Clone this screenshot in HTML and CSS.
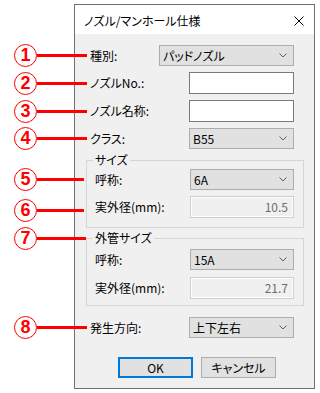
FILE: index.html
```html
<!DOCTYPE html>
<html>
<head>
    <title>ノズル/マンホール仕様</title>
    <meta charset="UTF-8">
    <meta name="viewport" content="width=device-width, initial-scale=1.0">
    <link rel="stylesheet" href="styles.css">
</head>
<body>
    <div class="page">
        <div class="dialog">
            <div class="titlebar">
                <span class="title">ノズル/マンホール仕様</span>
                <svg class="close" width="10" height="10" viewBox="0 0 10 10">
                    <path d="M0.5 0.5 L9.5 9.5 M9.5 0.5 L0.5 9.5" stroke="#000" stroke-width="1" fill="none"/>
                </svg>
            </div>
            <div class="dialog-body">
                <div class="row combo-row">
                    <span class="pin"><span class="num">1</span></span>
                    <span class="label">種別:</span>
                    <div class="combo wide"><span>パッドノズル</span><svg class="chev" width="8" height="5" viewBox="0 0 8 5"><polyline points="0.5,0.5 4,4 7.5,0.5" fill="none" stroke="#606060"/></svg></div>
                </div>
                <div class="row">
                    <span class="pin"><span class="num">2</span></span>
                    <span class="label">ノズルNo.:</span>
                    <div class="textbox"></div>
                </div>
                <div class="row">
                    <span class="pin"><span class="num">3</span></span>
                    <span class="label">ノズル名称:</span>
                    <div class="textbox"></div>
                </div>
                <div class="row combo-row">
                    <span class="pin"><span class="num">4</span></span>
                    <span class="label">クラス:</span>
                    <div class="combo"><span>B55</span><svg class="chev" width="8" height="5" viewBox="0 0 8 5"><polyline points="0.5,0.5 4,4 7.5,0.5" fill="none" stroke="#606060"/></svg></div>
                </div>

                <div class="group">
                    <div class="group-title"><span>サイズ</span></div>
                    <div class="group-box">
                        <div class="row combo-row">
                            <span class="pin inner"><span class="num">5</span></span>
                            <span class="label">呼称:</span>
                            <div class="combo"><span>6A</span><svg class="chev" width="8" height="5" viewBox="0 0 8 5"><polyline points="0.5,0.5 4,4 7.5,0.5" fill="none" stroke="#606060"/></svg></div>
                        </div>
                        <div class="row">
                            <span class="pin inner low"><span class="num">6</span></span>
                            <span class="label">実外径(mm):</span>
                            <div class="textbox readonly">10.5</div>
                        </div>
                    </div>
                </div>

                <div class="group second">
                    <div class="group-title">
                        <span class="pin title-pin"><span class="num">7</span></span>
                        <span>外管サイズ</span>
                    </div>
                    <div class="group-box">
                        <div class="row combo-row">
                            <span class="label">呼称:</span>
                            <div class="combo"><span>15A</span><svg class="chev" width="8" height="5" viewBox="0 0 8 5"><polyline points="0.5,0.5 4,4 7.5,0.5" fill="none" stroke="#606060"/></svg></div>
                        </div>
                        <div class="row">
                            <span class="label">実外径(mm):</span>
                            <div class="textbox readonly">21.7</div>
                        </div>
                    </div>
                </div>

                <div class="row combo-row direction">
                    <span class="pin"><span class="num">8</span></span>
                    <span class="label">発生方向:</span>
                    <div class="combo"><span>上下左右</span><svg class="chev" width="8" height="5" viewBox="0 0 8 5"><polyline points="0.5,0.5 4,4 7.5,0.5" fill="none" stroke="#606060"/></svg></div>
                </div>

                <div class="buttons">
                    <button class="btn default">OK</button>
                    <button class="btn">キャンセル</button>
                </div>
            </div>
        </div>
    </div>
</body>
</html>
```

FILE: styles.css
```css
body {
    margin: 0;
    background: #fff;
    font-family: "Noto Sans CJK JP", "Liberation Sans", sans-serif;
    font-size: 12px;
    font-feature-settings: "palt";
    color: #000;
}
.page {
    position: relative;
    width: 320px;
    height: 393px;
    padding: 4px 0 0 74px;
    box-sizing: border-box;
    overflow: hidden;
}
.dialog {
    width: 241px;
    height: 385px;
    border: 1px solid #707070;
    box-sizing: border-box;
    display: flex;
    flex-direction: column;
    background: #f0f0f0;
}
.titlebar {
    height: 29px;
    flex: none;
    background: #fff;
    display: flex;
    align-items: center;
    justify-content: space-between;
    padding: 3px 10px 0 9px;
    box-sizing: border-box;
}
.title {
    line-height: 16px;
}
.dialog-body {
    flex: 1;
    padding: 11px 20px 0 15px;
}
.row {
    display: flex;
    align-items: center;
    justify-content: space-between;
    height: 22px;
    margin-top: 6px;
}
.row:first-child {
    margin-top: 0;
}
.combo-row {
    height: 21px;
}
.label {
    line-height: 16px;
}
.combo {
    width: 105px;
    height: 21px;
    box-sizing: border-box;
    background: #e1e1e1;
    border: 1px solid #adadad;
    display: flex;
    align-items: center;
    justify-content: space-between;
    padding: 0 6px 0 3px;
}
.combo.wide {
    width: 135px;
}
.chev {
    display: block;
}
.textbox {
    width: 105px;
    height: 22px;
    box-sizing: border-box;
    background: #fff;
    border: 1px solid #7a7a7a;
}
.group .combo,
.group .textbox {
    width: 104px;
}
.textbox.readonly {
    background: #f0f0f0;
    border-color: #cfcfcf;
    box-shadow: inset 0 0 0 1px #fff;
    color: #6d6d6d;
    text-align: right;
    line-height: 20px;
    padding-right: 5px;
}

/* group box: title row draws the top edge */
.group {
    margin: 3px -10px 0 -4px;
}
.group.second {
    margin-top: 2px;
}
.group-title {
    display: flex;
    align-items: center;
    height: 16px;
    line-height: 16px;
}
.group-title span:last-child {
    padding: 0 2px;
}
.group-title::before,
.group-title::after {
    content: "";
    align-self: flex-end;
    height: 8px;
    box-sizing: border-box;
    border-top: 1px solid #d5d5d5;
}
.group-title::before {
    width: 7px;
    border-left: 1px solid #d5d5d5;
}
.group-title::after {
    flex: 1;
    border-right: 1px solid #d5d5d5;
}
.group-box {
    border: 1px solid #d5d5d5;
    border-top: none;
    padding: 1px 9px 9px 8px;
}
.group.second .group-box {
    padding-top: 3px;
    padding-bottom: 6px;
}
.group.second .row + .row {
    margin-top: 7px;
}
.row.direction {
    margin-top: 11px;
}
.buttons {
    display: flex;
    justify-content: flex-end;
    gap: 8px;
    margin: 19px 18px 0 0;
}
.btn {
    width: 75px;
    height: 21px;
    padding: 0;
    font: inherit;
    background: #e1e1e1;
    border: 1px solid #adadad;
    color: #000;
}
.btn.default {
    border: 2px solid #0078d7;
}

/* red callouts on the left */
.pin {
    position: absolute;
    left: 14px;
    width: 73px;
    height: 23px;
    display: flex;
    align-items: center;
}
.pin.inner {
    width: 70px;
}
.pin.low {
    transform: translateY(3px);
}
.pin.title-pin {
    width: 72px;
}
.pin::after {
    content: "";
    flex: 1;
    height: 3px;
    background: #ff0000;
}
.num {
    width: 23px;
    height: 23px;
    box-sizing: border-box;
    border: 1px solid #ff0000;
    border-radius: 50%;
    background: #fff;
    color: #ff0000;
    font-family: "Liberation Sans", sans-serif;
    font-weight: bold;
    font-size: 18px;
    line-height: 21px;
    text-align: center;
}
```
